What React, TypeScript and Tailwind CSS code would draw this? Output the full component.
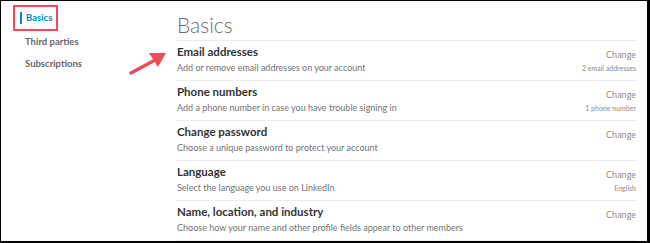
import React from 'react';

type Setting = {
  title: string;
  description: React.ReactNode;
  detail?: string;
};

const settings: Setting[] = [
  {
    title: 'Email addresses',
    description: 'Add or remove email addresses on your account',
    detail: '2 email addresses',
  },
  {
    title: 'Phone numbers',
    description: 'Add a phone number in case you have trouble signing in',
    detail: '1 phone number',
  },
  {
    title: 'Change password',
    description: 'Choose a unique password to protect your account',
  },
  {
    title: 'Language',
    description: 'Select the language you use on LinkedIn',
    detail: 'English',
  },
  {
    title: 'Name, location, and industry',
    description: 'Choose how your name and other profile fields appear to other members',
  },
];

function SettingRow({ title, description, detail }: Setting) {
  return (
    <div className="flex h-[40px] items-start justify-between border-b border-[#ebebeb]">
      <div className="flex flex-col">
        <div className="mt-[2px] text-[11.5px] font-bold leading-[18px] text-[#333333]">{title}</div>
        <div className="text-[9px] leading-[13px] text-[#737373]">{description}</div>
      </div>
      <div className="flex flex-col items-end">
        <div className="mt-[8px] text-[9px] leading-[12px] text-[#8c8c8c]">Change</div>
        {detail && <div className="mt-[2px] text-[7px] leading-[10px] text-[#8c8c8c]">{detail}</div>}
      </div>
    </div>
  );
}

export default function App() {
  return (
    <div
      className="relative h-[243px] w-[650px] overflow-hidden border-b-2 border-l border-r-[3px] border-t border-black bg-white"
      style={{ fontFamily: 'Lato, "Open Sans", sans-serif' }}
    >
      <div className="flex h-full">
        {/* Sidebar */}
        <div className="flex w-[176px] flex-col pl-[12px] pt-[4px]">
          <div className="flex h-[26px] w-[45px] items-center border-2 border-[#ec4b57] pl-[5px]">
            <span className="mr-[4px] h-[12px] w-[2px] shrink-0 bg-[#0a84c8]" />
            <span className="text-[9.5px] font-bold text-[#0a84c8]">Basics</span>
          </div>
          <div className="ml-[12px] mt-[5px] text-[9.5px] font-bold leading-[12px] text-[#666666]">Third parties</div>
          <div className="ml-[12px] mt-[10px] text-[9.5px] font-bold leading-[12px] text-[#666666]">Subscriptions</div>
        </div>

        {/* Main */}
        <div className="flex flex-1 flex-col pr-[11px]">
          <div className="h-[40px] border-b border-[#ebebeb] pt-[12px] text-[21px] font-light leading-[24px] text-[#6b6b6b]">
            Basics
          </div>
          {settings.map((s) => (
            <SettingRow key={s.title} {...s} />
          ))}
        </div>
      </div>

      {/* Annotation arrow */}
      <svg className="absolute left-[124px] top-[46px]" width="46" height="32" viewBox="0 0 46 32">
        <line x1="6" y1="26" x2="32" y2="12" stroke="#ec4b57" strokeWidth="3.5" strokeLinecap="round" />
        <polygon points="41,6 24,6 33,20" fill="#ec4b57" />
      </svg>
    </div>
  );
}
